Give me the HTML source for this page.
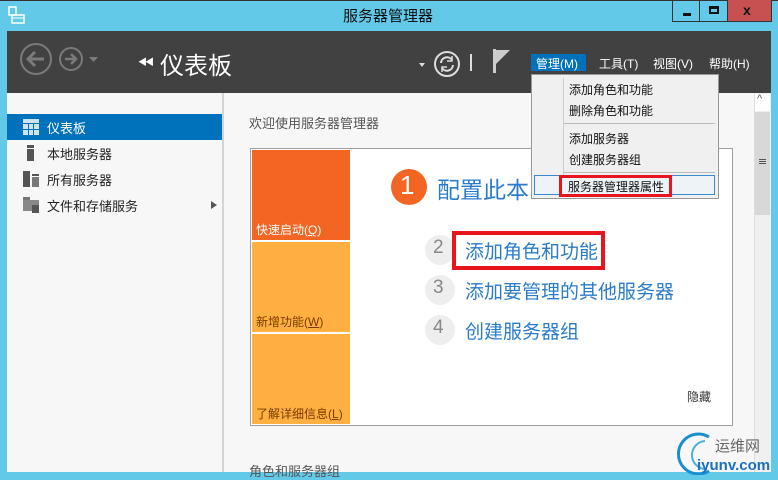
<!DOCTYPE html>
<html><head><meta charset="utf-8"><style>
*{margin:0;padding:0;box-sizing:border-box}
body{width:778px;height:479px;overflow:hidden;background:#63c9e9;font-family:"Liberation Sans","Noto Sans CJK SC",sans-serif;position:relative}
.a{position:absolute}
.t{white-space:nowrap}
</style></head><body>
<div class="a" style="left:0;top:0;width:778px;height:1px;background:#333"></div>
<svg class="a" style="left:8px;top:6px" width="18" height="18" viewBox="0 0 18 18"><rect x="1" y="1" width="7" height="8" fill="none" stroke="#fff" stroke-width="1.5"/><rect x="4" y="9" width="12" height="8" fill="none" stroke="#fff" stroke-width="1.5"/><line x1="4" y1="12" x2="16" y2="12" stroke="#fff"/></svg>
<div class="a t" style="left:343px;top:5px;font-size:15px;color:#111">服务器管理器</div>
<div class="a" style="left:672px;top:0;width:28px;height:22px;border:1px solid #333;border-top:none"></div>
<div class="a" style="left:683px;top:13px;width:8px;height:3px;background:#111"></div>
<div class="a" style="left:700px;top:0;width:28px;height:22px;border:1px solid #333;border-top:none;border-left:none"></div>
<div class="a" style="left:709px;top:6px;width:10px;height:8px;border:2px solid #111;border-top-width:3px"></div>
<div class="a" style="left:727px;top:0;width:45px;height:22px;background:#c75050;border:1px solid #333;border-top:none"></div>
<div class="a t" style="left:743px;top:2px;font-size:14px;font-weight:bold;color:#111">x</div>
<div class="a" style="left:7px;top:31px;width:764px;height:62px;background:#414141"></div>
<svg class="a" style="left:17px;top:43px" width="90" height="32" viewBox="0 0 90 32"><circle cx="19" cy="16" r="15" fill="none" stroke="#7a7a7a" stroke-width="2"/><path d="M11 16h16M18 9l-7 7 7 7" fill="none" stroke="#7a7a7a" stroke-width="3"/><circle cx="54" cy="16" r="11" fill="none" stroke="#7a7a7a" stroke-width="2"/><path d="M48 16h11M54 11l5 5-5 5" fill="none" stroke="#7a7a7a" stroke-width="2.5"/><path d="M72 14h9l-4.5 5z" fill="#7a7a7a"/></svg>
<div class="a t" style="left:138px;top:55px;font-size:9px;color:#fff;letter-spacing:-2px">◀◀</div>
<div class="a t" style="left:160px;top:46px;font-size:24px;color:#fff">仪表板</div>
<div class="a" style="left:419px;top:63px;width:0;height:0;border-left:3px solid transparent;border-right:3px solid transparent;border-top:4px solid #ddd"></div>
<svg class="a" style="left:433px;top:50px" width="28" height="28" viewBox="0 0 28 28"><circle cx="14" cy="14" r="12" fill="none" stroke="#ddd" stroke-width="2"/><path d="M8 13a6 6 0 0 1 11-3M20 15a6 6 0 0 1-11 3" fill="none" stroke="#ddd" stroke-width="2"/><path d="M19 6v5h-5M9 22v-5h5" fill="none" stroke="#ddd" stroke-width="1.5"/></svg>
<div class="a" style="left:470px;top:54px;width:2px;height:17px;background:#ddd"></div>
<svg class="a" style="left:492px;top:49px" width="20" height="24" viewBox="0 0 20 24"><rect x="1" y="0" width="3" height="24" fill="#ccc"/><path d="M4 1h14l-14 14z" fill="#ccc"/></svg>
<div class="a" style="left:531px;top:54px;width:55px;height:17px;background:#0072bc"></div>
<div class="a t" style="left:536px;top:55px;font-size:12px;color:#fff">管理(M)</div>
<div class="a t" style="left:599px;top:55px;font-size:12px;color:#fff">工具(T)</div>
<div class="a t" style="left:653px;top:55px;font-size:12px;color:#fff">视图(V)</div>
<div class="a t" style="left:709px;top:55px;font-size:12px;color:#fff">帮助(H)</div>
<div class="a" style="left:7px;top:93px;width:215px;height:379px;background:#f7f7f7"></div>
<div class="a" style="left:222px;top:93px;width:2px;height:379px;background:#d4d4d4"></div>
<div class="a" style="left:7px;top:114px;width:215px;height:26px;background:#0072bc"></div>
<svg class="a" style="left:23px;top:119px" width="16" height="16"><rect width="16" height="4" fill="#cfe4f3"/><rect y="5" width="5" height="5" fill="#cfe4f3"/><rect x="6" y="5" width="4" height="5" fill="#cfe4f3"/><rect x="11" y="5" width="5" height="5" fill="#cfe4f3"/><rect y="11" width="5" height="5" fill="#cfe4f3"/><rect x="6" y="11" width="4" height="5" fill="#cfe4f3"/><rect x="11" y="11" width="5" height="5" fill="#cfe4f3"/></svg>
<div class="a t" style="left:47px;top:118px;font-size:13px;color:#fff">仪表板</div>
<svg class="a" style="left:23px;top:145px" width="16" height="16"><rect x="4" y="0" width="7" height="3" fill="#555"/><rect x="4" y="4" width="7" height="12" fill="#555"/></svg>
<div class="a t" style="left:47px;top:144px;font-size:13px;color:#222">本地服务器</div>
<svg class="a" style="left:23px;top:171px" width="16" height="16"><rect x="0" y="0" width="7" height="16" fill="#555"/><rect x="9" y="3" width="7" height="2" fill="#555"/><rect x="9" y="6" width="7" height="10" fill="#777"/></svg>
<div class="a t" style="left:47px;top:170px;font-size:13px;color:#222">所有服务器</div>
<svg class="a" style="left:23px;top:197px" width="16" height="16"><rect x="0" y="0" width="7" height="3" fill="#777"/><rect x="0" y="3" width="16" height="11" fill="#888"/><rect x="9" y="8" width="7" height="8" fill="#555"/></svg>
<div class="a t" style="left:47px;top:196px;font-size:13px;color:#222">文件和存储服务</div>
<div class="a" style="left:211px;top:201px;width:0;height:0;border-top:4px solid transparent;border-bottom:4px solid transparent;border-left:6px solid #555"></div>
<div class="a" style="left:224px;top:93px;width:530px;height:379px;background:#f7f7f7"></div>
<div class="a t" style="left:249px;top:113px;font-size:13px;color:#555">欢迎使用服务器管理器</div>
<div class="a" style="left:250px;top:148px;width:483px;height:278px;background:#fff;border:1px solid #a0a0a0"></div>
<div class="a" style="left:252px;top:150px;width:98px;height:90px;background:#f26522"></div>
<div class="a" style="left:252px;top:242px;width:98px;height:90px;background:#ffb040"></div>
<div class="a" style="left:252px;top:334px;width:98px;height:90px;background:#ffb040"></div>
<div class="a t" style="left:256px;top:221px;font-size:12px;color:#fff">快速启动(<u>Q</u>)</div>
<div class="a t" style="left:256px;top:313px;font-size:12px;color:#7a3b00">新增功能(<u>W</u>)</div>
<div class="a t" style="left:256px;top:405px;font-size:12px;color:#7a3b00">了解详细信息(<u>L</u>)</div>
<div class="a" style="left:391px;top:169px;width:36px;height:36px;border-radius:50%;background:#f26522"></div>
<div class="a t" style="left:400px;top:170px;font-size:26px;color:#fff">1</div>
<div class="a t" style="left:437px;top:171px;font-size:23px;color:#2a7ccb">配置此本</div>
<div class="a" style="left:425px;top:235px;width:30px;height:30px;border-radius:50%;background:#eee"></div>
<div class="a t" style="left:433px;top:237px;font-size:19px;color:#888">2</div>
<div class="a" style="left:425px;top:275px;width:30px;height:30px;border-radius:50%;background:#eee"></div>
<div class="a t" style="left:433px;top:277px;font-size:19px;color:#888">3</div>
<div class="a" style="left:425px;top:315px;width:30px;height:30px;border-radius:50%;background:#eee"></div>
<div class="a t" style="left:433px;top:317px;font-size:19px;color:#888">4</div>
<div class="a" style="left:452px;top:231px;width:153px;height:39px;border:4px solid #e8141e"></div>
<div class="a t" style="left:465px;top:237px;font-size:19px;color:#2a7ccb">添加角色和功能</div>
<div class="a t" style="left:465px;top:277px;font-size:19px;color:#2a7ccb">添加要管理的其他服务器</div>
<div class="a t" style="left:465px;top:317px;font-size:19px;color:#2a7ccb">创建服务器组</div>
<div class="a t" style="left:687px;top:388px;font-size:12px;color:#333">隐藏</div>
<div class="a t" style="left:249px;top:461px;font-size:13px;color:#555">角色和服务器组</div>
<div class="a" style="left:754px;top:93px;width:17px;height:379px;background:#f0f0f0;border-left:1px solid #ddd"></div>
<div class="a" style="left:755px;top:94px;width:15px;height:17px;background:#fff"></div>
<div class="a t" style="left:757px;top:93px;font-size:11px;color:#555">^</div>
<div class="a" style="left:755px;top:112px;width:15px;height:103px;background:#d8d8d8"></div>
<div class="a" style="left:759px;top:159px;width:7px;height:1px;background:#555;box-shadow:0 2px 0 #555,0 4px 0 #555"></div>
<svg class="a" style="left:673px;top:431px" width="40" height="44"><path d="M36 6a20 20 0 1 0 0 34" fill="none" stroke="#1a8fd0" stroke-width="3"/><path d="M32 10a14 14 0 1 0 2 28" fill="none" stroke="#4ab0e0" stroke-width="2"/></svg>
<div class="a t" style="left:715px;top:435px;font-size:15px;color:#666">运维网</div>
<div class="a t" style="left:697px;top:457px;font-size:15px;color:#1a6fc0;font-weight:bold">iyunv.com</div>
<div class="a" style="left:531px;top:74px;width:188px;height:125px;background:#f0f0f0;border:1px solid #999"></div>
<div class="a" style="left:563px;top:78px;width:1px;height:118px;background:#ccc"></div>
<div class="a t" style="left:569px;top:81px;font-size:12px;color:#111">添加角色和功能</div>
<div class="a t" style="left:569px;top:102px;font-size:12px;color:#111">删除角色和功能</div>
<div class="a" style="left:564px;top:123px;width:151px;height:1px;background:#bbb"></div>
<div class="a t" style="left:569px;top:130px;font-size:12px;color:#111">添加服务器</div>
<div class="a t" style="left:569px;top:151px;font-size:12px;color:#111">创建服务器组</div>
<div class="a" style="left:564px;top:172px;width:151px;height:1px;background:#bbb"></div>
<div class="a" style="left:534px;top:175px;width:181px;height:20px;border:1px solid #3b88cc;background:#eef3f8"></div>
<div class="a" style="left:559px;top:175px;width:113px;height:22px;border:3px solid #e8141e"></div>
<div class="a t" style="left:568px;top:178px;font-size:12px;color:#111">服务器管理器属性</div>
</body></html>
